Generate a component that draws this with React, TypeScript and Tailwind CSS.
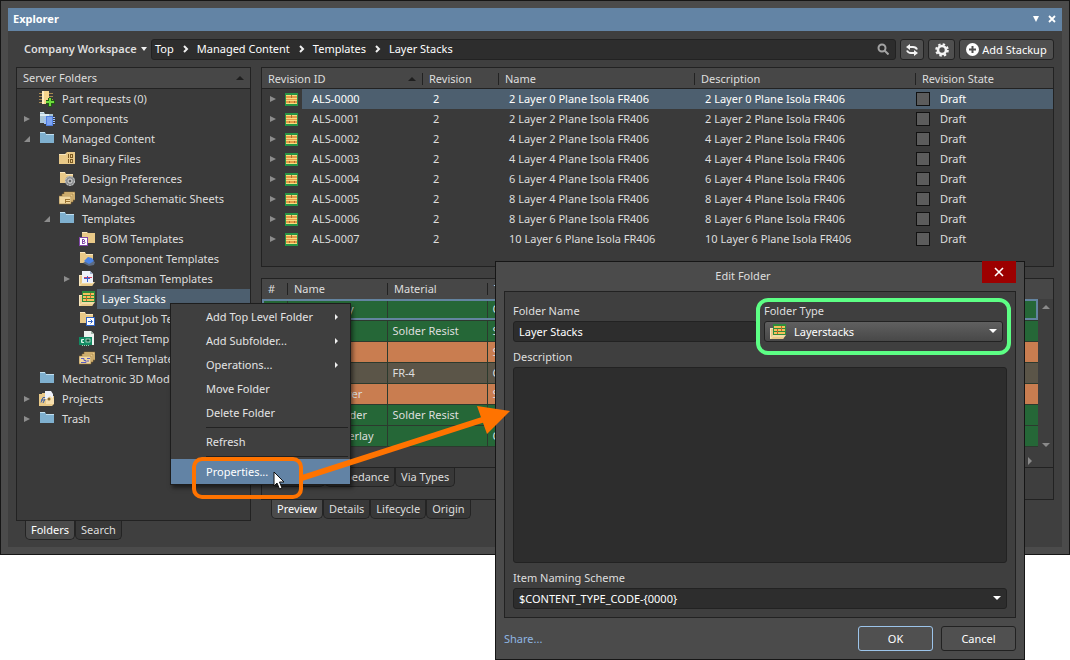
import type { ReactNode } from 'react'

type IconKind =
    | 'requests'
    | 'components'
    | 'folder'
    | 'binary'
    | 'prefs'
    | 'sheets'
    | 'bom'
    | 'compTemplate'
    | 'draftsman'
    | 'layers'
    | 'outjob'
    | 'project'
    | 'sch'
    | 'projects'

interface TreeNode {
    label: string
    level: number
    icon: IconKind
    state?: 'open' | 'closed'
    selected?: boolean
}

const tree: TreeNode[] = [
    { label: 'Part requests (0)', level: 0, icon: 'requests' },
    { label: 'Components', level: 0, icon: 'components', state: 'closed' },
    { label: 'Managed Content', level: 0, icon: 'folder', state: 'open' },
    { label: 'Binary Files', level: 1, icon: 'binary' },
    { label: 'Design Preferences', level: 1, icon: 'prefs' },
    { label: 'Managed Schematic Sheets', level: 1, icon: 'sheets' },
    { label: 'Templates', level: 1, icon: 'folder', state: 'open' },
    { label: 'BOM Templates', level: 2, icon: 'bom' },
    { label: 'Component Templates', level: 2, icon: 'compTemplate' },
    { label: 'Draftsman Templates', level: 2, icon: 'draftsman', state: 'closed' },
    { label: 'Layer Stacks', level: 2, icon: 'layers', selected: true },
    { label: 'Output Job Templates', level: 2, icon: 'outjob' },
    { label: 'Project Templates', level: 2, icon: 'project' },
    { label: 'SCH Templates', level: 2, icon: 'sch' },
    { label: 'Mechatronic 3D Models', level: 0, icon: 'folder' },
    { label: 'Projects', level: 0, icon: 'projects', state: 'closed' },
    { label: 'Trash', level: 0, icon: 'folder', state: 'closed' }
]

const indents = ['pl-[7px]', 'pl-[27px]', 'pl-[47px]']

const revisions = [
    { id: 'ALS-0000', name: '2 Layer 0 Plane Isola FR406' },
    { id: 'ALS-0001', name: '2 Layer 2 Plane Isola FR406' },
    { id: 'ALS-0002', name: '4 Layer 2 Plane Isola FR406' },
    { id: 'ALS-0003', name: '4 Layer 4 Plane Isola FR406' },
    { id: 'ALS-0004', name: '6 Layer 4 Plane Isola FR406' },
    { id: 'ALS-0005', name: '8 Layer 4 Plane Isola FR406' },
    { id: 'ALS-0006', name: '8 Layer 6 Plane Isola FR406' },
    { id: 'ALS-0007', name: '10 Layer 6 Plane Isola FR406' }
]

const stack = [
    { name: 'Top Overlay', material: '', type: 'Overlay', color: 'bg-[#256737]' },
    { name: 'Top Solder', material: 'Solder Resist', type: 'Solder Mask', color: 'bg-[#256737]' },
    { name: 'Top Layer', material: '', type: 'Signal', color: 'bg-[#c97d50]' },
    { name: 'Dielectric', material: 'FR-4', type: 'Core', color: 'bg-[#5b5548]' },
    { name: 'Bottom Layer', material: '', type: 'Signal', color: 'bg-[#c97d50]' },
    { name: 'Bottom Solder', material: 'Solder Resist', type: 'Solder Mask', color: 'bg-[#256737]' },
    { name: 'Bottom Overlay', material: '', type: 'Overlay', color: 'bg-[#256737]' }
]

const tan = '#e9c988'

function TanFolder() {
    return (
        <>
            <path d="M1 1h5l1 2h7v9H1z" fill={tan} />
            <path d="M1 1h5v1H1zM7 3h7v1H7z" fill="#f8e6bd" />
        </>
    )
}

function OpenTan() {
    return (
        <>
            <path d="M0 4h4v11H0z" fill="#f8e6bd" />
            <path d="M1 5h3v8H1z" fill={tan} />
            <path d="M0 15l3-4h13l-3 4z" fill="#f3dba6" />
            <path d="M3 13h11l-1 2H1z" fill={tan} />
        </>
    )
}

function NodeIcon({ kind }: { kind: IconKind }) {
    let art: ReactNode = null
    switch (kind) {
        case 'requests':
            art = (
                <>
                    <path d="M0 2.500h14M0 5.500h14M0 8.500h14M0 11.500h8" stroke="#a98a50" />
                    <rect x="3" y="0" width="7" height="13" fill="#f6d58c" />
                    <rect x="3" y="0" width="2" height="13" fill="#fdecc0" />
                    <path d="M11 7v9M7 11h9" stroke="#1f5a14" strokeWidth="4" />
                    <path d="M11 7v8M7 11h8" stroke="#6fdc3c" strokeWidth="2" />
                </>
            )
            break
        case 'components':
            art = (
                <>
                    <path d="M1 1h4l1 2h8v9H1z" fill="#a9c5d6" />
                    <path d="M1 1h4v1H1zM1 3h9v2H1z" fill="#dcebf3" />
                    <path d="M5 6.500h11M5 8.500h11M5 10.500h11M5 12.500h11" stroke="#9dc0ff" />
                    <rect x="7" y="5" width="7" height="10" fill="#4f7fe0" />
                    <rect x="8" y="6" width="5" height="8" fill="#7da4f2" />
                </>
            )
            break
        case 'folder':
            art = (
                <>
                    <path d="M1 1h5l1 2h8v9H1z" fill="#7fb0cf" />
                    <path d="M1 1h5v1H1zM7 3h8v1H7z" fill="#c2e0f0" />
                </>
            )
            break
        case 'binary':
            art = (
                <>
                    <path d="M0 3h6l2-2h8v12H0z" fill={tan} />
                    <path d="M0 3h7v1H0z" fill="#f8e6bd" />
                    <path d="M9.500 3v4M9.500 8v4" stroke="#7c5a22" />
                    <rect x="11.500" y="3.500" width="2" height="3" fill="none" stroke="#7c5a22" />
                    <rect x="11.500" y="8.500" width="2" height="3" fill="none" stroke="#7c5a22" />
                </>
            )
            break
        case 'prefs':
            art = (
                <>
                    <TanFolder />
                    <circle cx="11" cy="10" r="5" fill="#8d8f91" />
                    <circle cx="11" cy="10" r="4.500" fill="none" stroke="#c9cccd" strokeDasharray="2 1" />
                    <circle cx="11" cy="10" r="2" fill="#5e6062" stroke="#dcdcdc" />
                </>
            )
            break
        case 'sheets':
        case 'sch':
            art = (
                <>
                    <path d="M5 1h11v8H5z" fill={tan} stroke="#8a6a30" strokeWidth="0.6" />
                    <path d="M3 3h11v8H3z" fill={tan} stroke="#8a6a30" strokeWidth="0.6" />
                    <path d="M0 5h12v8H0z" fill="#f3d9a0" stroke="#8a6a30" strokeWidth="0.6" />
                    {kind === 'sch' ? (
                        <path d="M2 7.500h3v2h2v2H2M8 7.500h3M8 10h2" stroke="#5a5cc0" fill="none" />
                    ) : (
                        <path d="M6 8.500h5M6 10.500h5M6.500 8v4" stroke="#9a7434" fill="none" />
                    )}
                </>
            )
            break
        case 'bom':
            art = (
                <>
                    <path d="M3 1h5l1 1h7v10H3z" fill={tan} />
                    <path d="M3 1h5v1H3z" fill="#f8e6bd" />
                    <rect x="0" y="6" width="9" height="9" fill="#8247a8" />
                    <rect x="1" y="7" width="7" height="7" fill="#fff" />
                    <path d="M3.500 8v5M3 8.500h2l.5.5v1l-.5.500H4h1.500l.5.500v1l-.5.500H3" stroke="#8247a8" fill="none" />
                </>
            )
            break
        case 'compTemplate':
            art = (
                <>
                    <TanFolder />
                    <path d="M4 12l6-4 6 3-1 3-5 1z" fill="#5c6c84" />
                    <path d="M5 10l4-4 4 1 2 3-5 3z" fill="#4b84e6" />
                </>
            )
            break
        case 'draftsman':
            art = (
                <>
                    <OpenTan />
                    <path d="M3 0h8l3 3v9H3z" fill="#eef1f8" />
                    <path d="M11 0v3h3z" fill="#9fb2d0" />
                    <path d="M5 6.500h8" stroke="#d43e5e" />
                    <path d="M5 7.500h6M8.500 5v6" stroke="#3d5fd0" />
                </>
            )
            break
        case 'layers':
            art = (
                <>
                    <OpenTan />
                    <rect x="3" y="0" width="13" height="11" fill="#2d8c3c" />
                    <path d="M4 3h11M4 6h11M4 9h11" stroke="#f4c05a" strokeWidth="2" />
                    <path d="M7.500 5v5M11.500 2v5" stroke="#c5652c" />
                </>
            )
            break
        case 'outjob':
            art = (
                <>
                    <TanFolder />
                    <rect x="7" y="6" width="9" height="9" fill="#2f62c4" />
                    <rect x="8" y="7" width="7" height="7" fill="#fff" />
                    <path d="M9 10.500h4M11.500 8.500l2 2-2 2" stroke="#2f62c4" fill="none" />
                </>
            )
            break
        case 'project':
            art = (
                <>
                    <path d="M5 0h7l3 3v11H5z" fill="#eef3f0" />
                    <path d="M12 0v3h3z" fill="#9fb5a8" />
                    <rect x="0" y="6" width="13" height="8" fill="#128a62" />
                    <path d="M5 8.500H2.500v3H5M2 10h2" stroke="#d7f5e6" fill="none" />
                    <rect x="7" y="8" width="4" height="3" fill="#0a5038" stroke="#d7f5e6" strokeWidth="0.7" />
                    <path d="M3 14.500h8" stroke="#8be0b8" strokeDasharray="1 1" />
                </>
            )
            break
        case 'projects':
            art = (
                <>
                    <path d="M0 3h3v-1h10v3h2v8l-2 2H0z" fill={tan} />
                    <path d="M6 0h6l2 3v5H6z" fill="#eef1f8" />
                    <path d="M7 9l4-4 4 3v5H7z" fill="#f6dfae" />
                    <path d="M2 11.500l2-5h2M2 9h4M4 12l2-4" stroke="#3d5fa8" fill="none" />
                    <circle cx="10" cy="8" r="1.500" fill="#8a6a2c" />
                </>
            )
            break
    }
    return (
        <svg viewBox="0 0 16 16" className="h-4 w-4 shrink-0" aria-hidden="true">
            {art}
        </svg>
    )
}

function StackIcon() {
    return (
        <svg viewBox="0 0 13 13" className="h-[13px] w-[13px]" aria-hidden="true">
            <rect width="13" height="13" fill="#279447" />
            <rect x="1" y="2" width="11" height="9" fill="#e59a48" />
            <path d="M1 2.500h11M1 5.500h11M1 7.500h11M1 10.500h11" stroke="#f9dc7c" />
            <path d="M6.500 2v3M4.500 8v2M9.500 8v2" stroke="#b0702c" />
        </svg>
    )
}

function Expander({ state }: { state?: 'open' | 'closed' }) {
    return (
        <svg viewBox="0 0 8 8" className="mr-[7px] h-2 w-2 shrink-0" aria-hidden="true">
            {state === 'closed' && <path d="M0 1l6 3-6 3z" fill="#8c8c8c" />}
            {state === 'open' && <path d="M6 1v6H0z" fill="#8c8c8c" />}
        </svg>
    )
}

function Caret({ className = '' }: { className?: string }) {
    return (
        <svg viewBox="0 0 8 4" className={`h-1 w-2 ${className}`} fill="currentColor" aria-hidden="true">
            <path d="M0 0h8L4 4z" />
        </svg>
    )
}

function Chevron() {
    return (
        <svg viewBox="0 0 7 8" className="h-2 w-[7px]" fill="none" stroke="#f0f0f0" strokeWidth="2" aria-hidden="true">
            <path d="M2 1l3 3-3 3" />
        </svg>
    )
}

function Tab({ label, active = false }: { label: string; active?: boolean }) {
    return (
        <button
            className={`h-[19px] rounded-b-[5px] border border-t-0 border-[#242424] px-[5px] ${active ? 'bg-[#4b4b4b] text-white' : 'bg-[#383838]'}`}
        >
            {label}
        </button>
    )
}

function TreePanel() {
    return (
        <aside className="flex w-[235px] shrink-0 flex-col">
            <div className="flex flex-1 flex-col border border-[#222] bg-[#3a3a3a]">
                <div className="flex h-[21px] items-center justify-between border-b border-[#222] bg-[#474747] px-1.5">
                    <span>Server Folders</span>
                    <Caret className="rotate-180 text-[#1f1f1f]" />
                </div>
                <ul className="overflow-hidden">
                    {tree.map((node) => (
                        <li key={node.label} className={`flex h-5 items-center whitespace-nowrap ${indents[node.level]}`}>
                            <Expander state={node.state} />
                            <NodeIcon kind={node.icon} />
                            <span
                                className={`ml-0.5 flex h-5 flex-1 items-center pl-[5px] ${node.selected ? 'bg-[#4d5f6f] text-white' : ''}`}
                            >
                                {node.label}
                            </span>
                        </li>
                    ))}
                </ul>
            </div>
            <div className="flex pl-[9px]">
                <Tab label="Folders" active />
                <Tab label="Search" />
            </div>
        </aside>
    )
}

function RevisionTable() {
    return (
        <div className="border border-[#222] bg-[#3a3a3a] pb-[17px]">
            <table className="w-full table-fixed border-collapse text-left">
                <colgroup>
                    <col className="w-10" />
                    <col className="w-[120px]" />
                    <col className="w-[76px]" />
                    <col className="w-[196px]" />
                    <col className="w-[221px]" />
                    <col />
                </colgroup>
                <thead>
                    <tr className="h-[21px] bg-[#474747] shadow-[inset_0_-1px_0_#222]">
                        <th colSpan={2} className="p-0 pl-1.5 font-normal">
                            <div className="flex items-center justify-between pr-1.5">
                                Revision ID
                                <Caret className="rotate-180 text-[#1f1f1f]" />
                            </div>
                        </th>
                        {['Revision', 'Name', 'Description', 'Revision State'].map((title) => (
                            <th key={title} className="p-0 font-normal">
                                <div className="h-3 border-l border-[#222] pl-1.5 leading-3">{title}</div>
                            </th>
                        ))}
                    </tr>
                </thead>
                <tbody>
                    {revisions.map((rev, i) => {
                        const cell = i === 0 ? 'bg-[#4d5f6f] p-0 text-white' : 'p-0'
                        return (
                            <tr key={rev.id} className="h-5">
                                <td className="p-0">
                                    <div className="flex items-center pl-2">
                                        <Expander state="closed" />
                                        <StackIcon />
                                    </div>
                                </td>
                                <td className={cell}>
                                    <div className="pl-[10px]">{rev.id}</div>
                                </td>
                                <td className={cell}>
                                    <div className="pl-[11px]">2</div>
                                </td>
                                <td className={cell}>
                                    <div className="pl-[11px]">{rev.name}</div>
                                </td>
                                <td className={cell}>
                                    <div className="pl-[11px]">{rev.name}</div>
                                </td>
                                <td className={cell}>
                                    <div className="flex items-center gap-[10px] pl-px">
                                        <span className="h-[14px] w-[14px] border border-[#111] bg-[#5c5c5c]" />
                                        Draft
                                    </div>
                                </td>
                            </tr>
                        )
                    })}
                </tbody>
            </table>
        </div>
    )
}

function StackPreview() {
    return (
        <div className="border border-[#222] bg-[#3e3e3e] pb-3">
            <div className="flex">
                <table className="flex-1 table-fixed border-collapse text-left">
                    <colgroup>
                        <col className="w-[25px]" />
                        <col className="w-[100px]" />
                        <col className="w-[100px]" />
                        <col />
                    </colgroup>
                    <thead>
                        <tr className="h-5 bg-[#474747]">
                            <th className="p-0 pl-1.5 font-normal">#</th>
                            {['Name', 'Material', 'Type'].map((title) => (
                                <th key={title} className="p-0 font-normal">
                                    <div className="h-3 border-l border-[#222] pl-1.5 leading-3">{title}</div>
                                </th>
                            ))}
                        </tr>
                    </thead>
                    <tbody>
                        {stack.map((layer, i) => (
                            <tr
                                key={layer.name}
                                className={`h-[21px] border-b border-[#2c3a2e] ${layer.color} ${i === 0 ? 'outline-2 -outline-offset-2 outline-[#6384a0]' : ''}`}
                            >
                                <td className="border-r border-[#2c3a2e] p-0" />
                                <td className="border-r border-[#2c3a2e] p-0 pl-[5px]">{layer.name}</td>
                                <td className="border-r border-[#2c3a2e] p-0 pl-[5px]">{layer.material}</td>
                                <td className="p-0 pl-[5px]">{layer.type}</td>
                            </tr>
                        ))}
                    </tbody>
                </table>
                <div className="flex w-[15px] flex-col items-center justify-between bg-[linear-gradient(#474747_20px,#3e3e3e_20px)] pt-[26px]">
                    <Caret className="rotate-180 text-[#8a8a8a]" />
                    <Caret className="text-[#8a8a8a]" />
                </div>
            </div>
            <div className="flex h-[21px] items-center justify-end border-b border-[#222] pt-2 pr-[21px]">
                <svg viewBox="0 0 4 8" className="h-2 w-1" aria-hidden="true">
                    <path d="M0 0l4 4-4 4z" fill="#8a8a8a" />
                </svg>
            </div>
            <div className="flex pl-[10px]">
                <Tab label="Stackup" />
                <Tab label="Impedance" />
                <Tab label="Via Types" />
            </div>
        </div>
    )
}

const menuItem = 'flex w-full items-center justify-between pr-3 pl-[35px] text-left'

function ContextMenu() {
    return (
        <div
            role="menu"
            className="absolute top-[303px] left-[170px] w-[181px] border border-[#1d1d1d] bg-[#3f3f3f] pt-px text-[#e4e4e4] shadow-[2px_3px_4px_rgba(0,0,0,0.5)]"
        >
            {['Add Top Level Folder', 'Add Subfolder...', 'Operations...', 'Move Folder', 'Delete Folder'].map((label, i) => (
                <button key={label} role="menuitem" className={`${menuItem} h-6`}>
                    {label}
                    {i < 3 && (
                        <svg viewBox="0 0 3 6" className="h-1.5 w-[3px]" aria-hidden="true">
                            <path d="M0 0l3 3-3 3z" fill="#f0f0f0" />
                        </svg>
                    )}
                </button>
            ))}
            <hr className="my-0.5 mr-0.5 ml-[35px] border-[#222]" />
            <button role="menuitem" className={`${menuItem} h-6`}>
                Refresh
            </button>
            <hr className="my-0.5 mr-0.5 ml-[35px] border-[#222]" />
            <div className="relative">
                <button role="menuitem" className={`${menuItem} h-[25px] bg-[#6283a5] text-white`}>
                    Properties...
                </button>
                <div className="absolute -top-0.5 left-[21px] h-[42px] w-[111px] rounded-[10px] border-4 border-[#ff7300]" />
                <svg viewBox="0 0 12 19" className="absolute top-3 left-[102px] h-[19px] w-3" aria-hidden="true">
                    <path d="M1 1v14l3-3 2.500 6 2.500-1-2.500-6H11z" fill="#fff" stroke="#111" />
                </svg>
            </div>
        </div>
    )
}

const fieldLabel = 'block h-[17px] leading-[14px]'

function EditFolderDialog() {
    return (
        <div
            role="dialog"
            aria-label="Edit Folder"
            className="absolute top-[261px] left-[495px] w-[530px] border border-[#161616] bg-[#4b4b4b] px-2 pb-2"
        >
            <div className="flex h-[29px] items-start">
                <h2 className="flex-1 pt-[5px] text-center leading-[18px]">Edit Folder</h2>
                <button aria-label="Close" className="-mt-px flex h-[22px] w-[34px] items-center justify-center bg-[#9c0000]">
                    <svg viewBox="0 0 10 10" className="h-[10px] w-[10px]" stroke="#fff" strokeWidth="1.6" aria-hidden="true">
                        <path d="M1 1l8 8M9 1l-8 8" />
                    </svg>
                </button>
            </div>
            <div className="border border-[#222] bg-[#3f3f3f] px-2 pt-3 pb-2">
                <div className="flex gap-[7px]">
                    <div className="flex-1">
                        <label htmlFor="folder-name" className={fieldLabel}>
                            Folder Name
                        </label>
                        <input
                            id="folder-name"
                            defaultValue="Layer Stacks"
                            className="block h-[21px] w-full rounded-[3px] border border-[#222] bg-[#2d2d2d] px-[5px] text-white"
                        />
                    </div>
                    <div className="relative mr-1 w-[239px]">
                        <label htmlFor="folder-type" className={fieldLabel}>
                            Folder Type
                        </label>
                        <div className="relative">
                            <select
                                id="folder-type"
                                className="block h-[21px] w-full appearance-none rounded-[3px] border border-[#222] bg-linear-to-b from-[#606060] to-[#484848] pl-[29px] text-white"
                            >
                                <option>Layerstacks</option>
                            </select>
                            <span className="pointer-events-none absolute top-[3px] left-1.5">
                                <NodeIcon kind="layers" />
                            </span>
                            <Caret className="pointer-events-none absolute top-2 right-1.5 text-white" />
                        </div>
                        <div className="pointer-events-none absolute -inset-x-2 -top-1.5 -bottom-[13px] rounded-xl border-4 border-[#5dff85]" />
                    </div>
                </div>
                <label htmlFor="description" className={`${fieldLabel} mt-2`}>
                    Description
                </label>
                <textarea
                    id="description"
                    className="block h-[196px] w-full resize-none rounded-[3px] border border-[#222] bg-[#2d2d2d]"
                />
                <label htmlFor="naming" className={`${fieldLabel} mt-2`}>
                    Item Naming Scheme
                </label>
                <div className="relative">
                    <select
                        id="naming"
                        className="block h-[21px] w-full appearance-none rounded-[3px] border border-[#222] bg-[#2d2d2d] px-[5px] text-white"
                    >
                        <option>{'$CONTENT_TYPE_CODE-{0000}'}</option>
                    </select>
                    <Caret className="pointer-events-none absolute top-2 right-1.5 text-white" />
                </div>
            </div>
            <div className="mt-2 flex items-center gap-2">
                <a href="#share" className="flex-1 text-[#8fb6e2]">
                    Share...
                </a>
                <button className="h-[25px] w-[75px] rounded-[3px] border border-[#9cc4ea] bg-[#505050] text-white">OK</button>
                <button className="h-[25px] w-[75px] rounded-[3px] border border-[#222] bg-[#505050] text-white">Cancel</button>
            </div>
        </div>
    )
}

const toolButton = 'flex h-[21px] items-center justify-center rounded-[3px] border border-[#222] bg-[#4f4f4f] text-white'

export default function App() {
    const crumbs = ['Top', 'Managed Content', 'Templates', 'Layer Stacks']

    return (
        <div className="relative min-h-screen bg-white font-['Noto_Sans',sans-serif] text-[11px] leading-[16px] text-[#dedede]">
            <main className="border border-[#161616] bg-[#4b4b4b] p-[7px]">
                <header className="flex h-[23px] items-center bg-[#6384a5] px-[5px] pb-0.5 font-bold text-white">
                    <h1 className="flex-1">Explorer</h1>
                    <button aria-label="Window menu" className="mr-2">
                        <svg viewBox="0 0 8 6" className="h-1.5 w-2" aria-hidden="true">
                            <path d="M1 0h6L4 6z" fill="#fff" />
                        </svg>
                    </button>
                    <button aria-label="Close panel" className="mr-px">
                        <svg viewBox="0 0 8 8" className="h-2 w-2" stroke="#fff" strokeWidth="1.800" aria-hidden="true">
                            <path d="M1 1l6 6M7 1l-6 6" />
                        </svg>
                    </button>
                </header>
                <div className="bg-[#3f3f3f] px-2 pt-2 pb-[7px]">
                    <div className="flex items-center">
                        <button className="flex w-[135px] items-center gap-1 pb-0.5 pl-2 font-semibold whitespace-nowrap">
                            Company Workspace
                            <svg viewBox="0 0 6 4" className="h-1 w-1.5" aria-hidden="true">
                                <path d="M0 0h6L3 4z" fill="#f0f0f0" />
                            </svg>
                        </button>
                        <nav className="flex h-[21px] flex-1 items-center gap-2 rounded-[3px] border border-[#222] bg-[#2d2d2d] px-[3px] pb-px text-white">
                            {crumbs.map((crumb, i) => (
                                <span key={crumb} className="flex items-center gap-2">
                                    {i > 0 && <Chevron />}
                                    <a href="#path">{crumb}</a>
                                </span>
                            ))}
                            <svg viewBox="0 0 12 12" className="mr-[3px] ml-auto h-3 w-3" fill="none" stroke="#a3a3a3" strokeWidth="2" aria-hidden="true">
                                <circle cx="5" cy="5" r="3.500" />
                                <path d="M7.500 7.500l4 4" />
                            </svg>
                        </nav>
                        <button aria-label="Refresh" className={`${toolButton} ml-1 w-6`}>
                            <svg viewBox="0 0 12 12" className="h-3 w-3" aria-hidden="true">
                                <path d="M3 3h4q3 0 4 2.500M9 9H5Q2 9 1 6.500" fill="none" stroke="#f4f4f4" strokeWidth="2" />
                                <path d="M4 0v6L0 3zM8 6v6l4-3z" fill="#f4f4f4" />
                            </svg>
                        </button>
                        <button aria-label="Settings" className={`${toolButton} ml-1 w-[27px]`}>
                            <svg viewBox="0 0 14 14" className="h-[14px] w-[14px]" fill="none" stroke="#f4f4f4" aria-hidden="true">
                                <circle cx="7" cy="7" r="4" strokeWidth="2.600" />
                                <circle cx="7" cy="7" r="5.800" strokeWidth="2" strokeDasharray="2.400 2.155" />
                            </svg>
                        </button>
                        <button className={`${toolButton} ml-1 w-[95px] gap-[3px]`}>
                            <svg viewBox="0 0 13 13" className="h-[13px] w-[13px] shrink-0" aria-hidden="true">
                                <circle cx="6.500" cy="6.500" r="6.500" fill="#fff" />
                                <path d="M6.500 3v7M3 6.500h7" stroke="#4f4f4f" strokeWidth="2" />
                            </svg>
                            Add Stackup
                        </button>
                    </div>
                    <div className="mt-[7px] flex gap-[10px]">
                        <TreePanel />
                        <div className="min-w-0 flex-1 pb-[21px]">
                            <RevisionTable />
                            <div className="mt-[11px]">
                                <StackPreview />
                                <div className="flex pl-[10px]">
                                    <Tab label="Preview" active />
                                    <Tab label="Details" />
                                    <Tab label="Lifecycle" />
                                    <Tab label="Origin" />
                                </div>
                            </div>
                        </div>
                    </div>
                </div>
            </main>
            <ContextMenu />
            <EditFolderDialog />
            {/* callout arrow from the menu entry to the dialog */}
            <svg viewBox="0 0 210 80" className="pointer-events-none absolute top-[404px] left-[301px] h-20 w-[210px]" aria-hidden="true">
                <path d="M1 74L184 15" stroke="#ff7300" strokeWidth="6" />
                <path d="M209 7L176 2l10 28z" fill="#ff7300" />
            </svg>
        </div>
    )
}
